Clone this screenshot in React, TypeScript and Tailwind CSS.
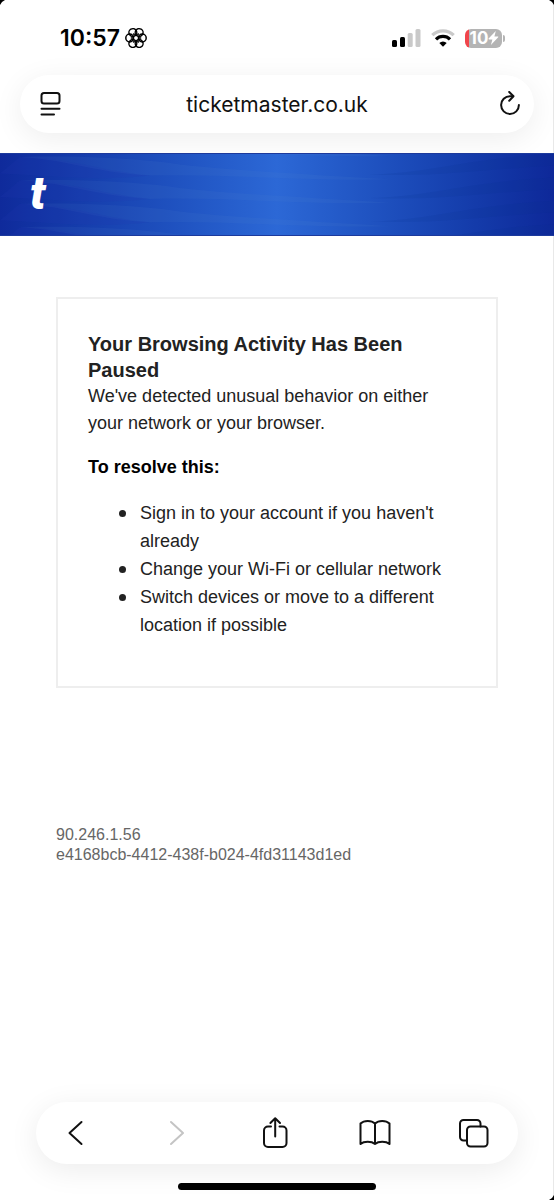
import type { ReactNode } from "react";

const steps = [
  "Sign in to your account if you haven't already",
  "Change your Wi-Fi or cellular network",
  "Switch devices or move to a different location if possible",
];

const petals = [0, 60, 120, 180, 240, 300];

function StatusBar() {
  return (
    <div className="flex h-6 items-center justify-between pl-[60px] pr-[49px]">
      <div className="flex items-center gap-1">
        <time className="text-[23px] leading-6 font-semibold">10:57</time>
        <svg width="24" height="24" viewBox="-12 -12 24 24" fill="none" stroke="black" strokeWidth="1.5" aria-hidden="true">
          {petals.map((angle) => (
            <g key={angle} transform={`rotate(${angle})`}>
              <circle cx="6.3" cy="0" r="3.9" />
              <path d="M3 0H5.2" />
            </g>
          ))}
        </svg>
      </div>
      <div className="flex items-center gap-2.5">
        <svg width="29" height="18" viewBox="0 0 29 18" aria-hidden="true">
          <rect x="0" y="11" width="5" height="7" rx="1.5" fill="black" />
          <rect x="8" y="8" width="5" height="10" rx="1.5" fill="black" />
          <rect x="15.7" y="4" width="5" height="14" rx="1.5" fill="#c9c9c9" />
          <rect x="23.5" y="0" width="5" height="18" rx="1.5" fill="#c9c9c9" />
        </svg>
        <svg width="24" height="18" viewBox="0 0 24 18" fill="none" strokeWidth="3.2" aria-hidden="true">
          <path d="M1.3 6.2a15.2 15.2 0 0 1 21.4 0" stroke="#c9c9c9" />
          <path d="M5 10.4a9.8 9.8 0 0 1 14 0" stroke="black" />
          <path d="M12 17.8 8.3 14.1a5.3 5.3 0 0 1 7.4 0z" fill="black" />
        </svg>
        <div className="flex items-center gap-px">
          <div className="flex h-[19px] w-[37px] items-center justify-center rounded-md bg-linear-to-r from-[#f0454b] from-11% to-[#b4b4b4] to-11% pl-0.5 text-white">
            <span className="text-[17px] leading-none font-bold">10</span>
            <svg width="11" height="14" viewBox="0 0 11 14" fill="currentColor" aria-hidden="true">
              <path d="M7.8 0 .6 7.6c-.3.4-.1.8.4.8h3.4L2.9 14l7.3-7.7c.3-.4.1-.8-.4-.8H6.4z" />
            </svg>
          </div>
          <div className="h-[7px] w-0.5 rounded-r-full bg-[#b4b4b4]" />
        </div>
      </div>
    </div>
  );
}

function AddressBar() {
  return (
    <div className="mx-5 flex h-[58px] items-center rounded-full bg-white pl-5 pr-3 shadow-[0_6px_30px_rgba(0,0,0,0.07)]">
      <button type="button" aria-label="Page menu">
        <svg width="22" height="26" viewBox="0 0 22 26" fill="none" stroke="#111" strokeWidth="2" strokeLinecap="round">
          <rect x="1.5" y="2" width="18" height="10.5" rx="2.5" />
          <path d="M1.5 17.8h18M1.5 23.4h12.5" />
        </svg>
      </button>
      <span className="flex-1 pt-0.5 pr-1.5 text-center text-[21px] leading-7 text-[#111]">ticketmaster.co.uk</span>
      <button type="button" aria-label="Reload">
        <svg width="24" height="26" viewBox="0 0 24 26" fill="none" stroke="#111" strokeWidth="2" strokeLinecap="round" strokeLinejoin="round">
          <path d="M14.6 5.2H12a8.9 8.9 0 1 0 8.9 8.9" />
          <path d="M11.2 1 15.5 5.3l-4.3 4.4" />
        </svg>
      </button>
    </div>
  );
}

function Banner() {
  return (
    <div className="relative flex h-[83px] items-center overflow-hidden border-y border-[#1d3a9c] bg-linear-to-r from-[#0f2a9b] via-[#2c68d6] to-[#0e2899] px-[30px]">
      <svg className="absolute inset-0 h-full w-full" viewBox="0 0 554 83" preserveAspectRatio="none" aria-hidden="true">
        {[-24, 0, 24, 48, 72].map((y) => (
          <g key={y} transform={`translate(0 ${y})`}>
            <path d="M20 3C70 6 100 20 150 22C230 20 300 28 390 26C300 20 210 16 160 8C110 3 70 2 20 3Z" fill="#5b8bd0" opacity=".1" />
            <path d="M0 20C60 23 100 28 150 22C110 19 70 4 20 3Z" fill="#2436b0" opacity=".18" />
            <path d="M370 21C430 20 470 4 554 0V12C490 15 440 24 370 21Z" fill="#0c2f88" opacity=".12" />
          </g>
        ))}
      </svg>
      <a href="#" aria-label="Home" className="relative pb-1 font-[Roboto,sans-serif] text-[46px] leading-none font-black italic text-white">
        t
      </a>
    </div>
  );
}

function ToolButton({ label, disabled, children }: { label: string; disabled?: boolean; children: ReactNode }) {
  return (
    <button type="button" aria-label={label} disabled={disabled} className="flex w-10 justify-center text-[#111] disabled:text-[#c4c4c4]">
      <svg width="34" height="34" viewBox="0 0 34 34" fill="none" stroke="currentColor" strokeWidth="2" strokeLinecap="round" strokeLinejoin="round">
        {children}
      </svg>
    </button>
  );
}

function Toolbar() {
  return (
    <nav className="mx-9 flex h-[62px] items-center justify-between rounded-full bg-white pl-5 pr-[22px] shadow-[0_6px_30px_rgba(0,0,0,0.08)]">
      <ToolButton label="Back">
        <path d="M22.5 6 10.5 17l12 11" />
      </ToolButton>
      <ToolButton label="Forward" disabled>
        <path d="m12 6 12 11-12 11" />
      </ToolButton>
      <ToolButton label="Share">
        <path d="M12 10.5H9a4 4 0 0 0-4 4v12.500a4 4 0 0 0 4 4h14.500a4 4 0 0 0 4-4v-12.500a4 4 0 0 0-4-4h-3" />
        <path d="M16.200 20.500V2.500M11.400 7 16.200 2.300 21 7" />
      </ToolButton>
      <ToolButton label="Bookmarks">
        <path d="M16 7.500C12.500 4 5 4 1.500 7.500V28C5 25 12.500 25 16 28C19.500 25 27 25 30.500 28V7.500C27 4 19.500 4 16 7.500ZM16 7.500V28" />
      </ToolButton>
      <ToolButton label="Tabs">
        <rect x="8" y="10.500" width="20.500" height="20" rx="3.500" />
        <path d="M8 24.500H4.500A3.500 3.500 0 0 1 1 21V7.500A3.500 3.500 0 0 1 4.500 4H18a3.500 3.500 0 0 1 3.500 3.500v3" />
      </ToolButton>
    </nav>
  );
}

export default function App() {
  return (
    <div className="relative flex min-h-screen flex-col bg-white font-[Inter,sans-serif] text-black">
      <svg className="absolute top-0 left-0" width="5" height="5" viewBox="0 0 5 5" aria-hidden="true">
        <path d="M0 0H5Q1.500 1.500 0 5Z" />
      </svg>
      <svg className="absolute top-0 right-0" width="5" height="5" viewBox="0 0 5 5" aria-hidden="true">
        <path d="M5 0H0Q3.500 1.500 5 5Z" />
      </svg>
      <svg className="absolute right-0 bottom-0" width="5" height="5" viewBox="0 0 5 5" aria-hidden="true">
        <path d="M5 5H0Q3.500 3.500 5 0Z" />
      </svg>

      <header className="flex flex-col gap-[25px] overflow-hidden pt-[26px] pb-5 shadow-[inset_-1px_0_#e8e8e8]">
        <StatusBar />
        <AddressBar />
      </header>
      <Banner />

      <div className="flex grow flex-col overflow-hidden shadow-[inset_-1px_0_#e8e8e8]">
        <main className="px-14 pt-[61px] font-['Liberation_Sans',Arial,sans-serif] text-lg text-[#222]">
          <section className="border-2 border-[#eee] px-[30px] pt-8 pb-[47px]">
            <h1 className="text-[20px] leading-[26px] font-bold">Your Browsing Activity Has Been Paused</h1>
            <p className="leading-[27px]">We've detected unusual behavior on either your network or your browser.</p>
            <h2 className="mt-4 leading-7 font-bold text-black">To resolve this:</h2>
            <ul className="mt-[18px] leading-7">
              {steps.map((step) => (
                <li key={step} className="flex gap-[14px] pl-[31px] before:mt-[11px] before:size-[7px] before:shrink-0 before:rounded-full before:bg-[#222] before:content-['']">
                  {step}
                </li>
              ))}
            </ul>
          </section>
          <p className="mt-[137px] text-base leading-5 text-[#666]">
            90.246.1.56
            <br />
            e4168bcb-4412-438f-b024-4fd31143d1ed
          </p>
        </main>
        <footer className="mt-auto pb-2.5">
          <Toolbar />
          <div className="mx-auto mt-[19px] h-[7px] w-[198px] rounded-full bg-black" />
        </footer>
      </div>
    </div>
  );
}
